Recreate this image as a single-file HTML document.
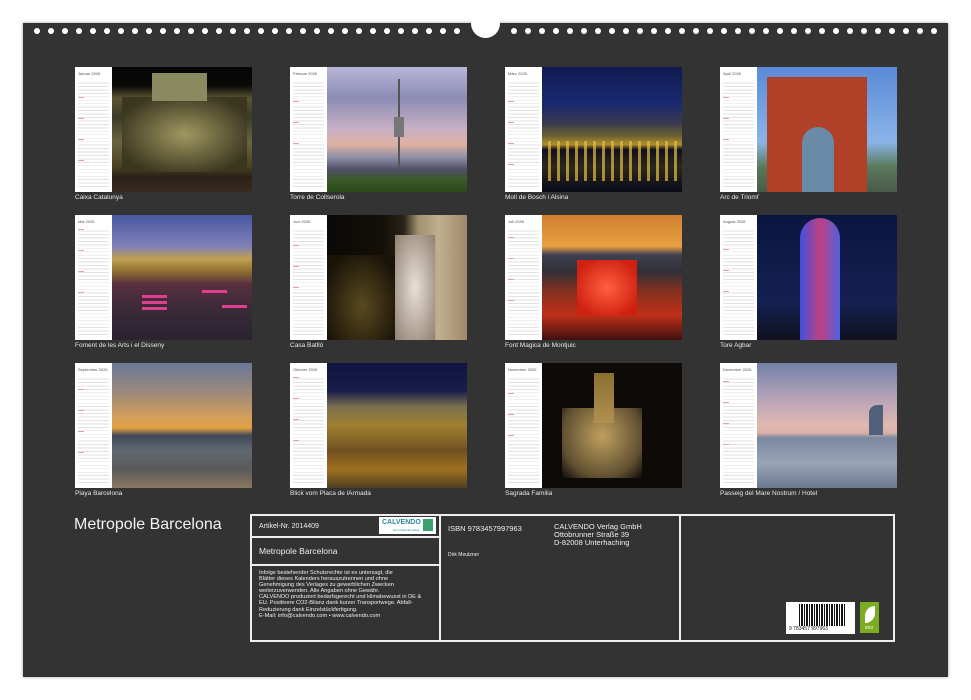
<!DOCTYPE html>
<html><head><meta charset="utf-8"><style>
*{margin:0;padding:0;box-sizing:border-box}
body{width:971px;height:700px;background:#fff;position:relative;overflow:hidden;font-family:"Liberation Sans",Arial,sans-serif}
.panel{position:absolute;left:23px;top:23px;width:925px;height:654px;background:#333;box-shadow:0 0 3px rgba(0,0,0,.4)}
.hole{position:absolute;width:6px;height:6px;border-radius:50%;background:#fff;top:28px}
.notch{position:absolute;left:471px;top:9px;width:29px;height:29px;border-radius:50%;background:#fff}
.cell{position:absolute;width:177px;height:125px}
.strip{position:absolute;left:0;top:0;width:37px;height:125px;background:#fff}
.strip .m{position:absolute;left:3px;top:4px;font-size:4px;color:#555}
.strip .l{position:absolute;left:3px;top:13px;width:31px;height:107px;background:repeating-linear-gradient(to bottom,transparent 0,transparent 2.6px,#e2e2e2 2.6px,#e2e2e2 3.45px)}
.strip .r{position:absolute;left:3px;width:6px;height:1px;background:#e8a0a0}
.ph{position:absolute;left:37px;top:0;width:140px;height:125px;overflow:hidden}
.cap{position:absolute;left:0;top:127px;font-size:6.5px;color:#e8e8e8;white-space:nowrap}
.box{position:absolute;border:2px solid #eee}
.t{position:absolute;color:#eee;white-space:nowrap}
</style></head><body>
<div class="panel"></div>
<div class="hole" style="left:34px"></div><div class="hole" style="left:48px"></div><div class="hole" style="left:62px"></div><div class="hole" style="left:76px"></div><div class="hole" style="left:90px"></div><div class="hole" style="left:104px"></div><div class="hole" style="left:118px"></div><div class="hole" style="left:132px"></div><div class="hole" style="left:146px"></div><div class="hole" style="left:160px"></div><div class="hole" style="left:174px"></div><div class="hole" style="left:188px"></div><div class="hole" style="left:202px"></div><div class="hole" style="left:216px"></div><div class="hole" style="left:230px"></div><div class="hole" style="left:244px"></div><div class="hole" style="left:258px"></div><div class="hole" style="left:272px"></div><div class="hole" style="left:286px"></div><div class="hole" style="left:300px"></div><div class="hole" style="left:314px"></div><div class="hole" style="left:328px"></div><div class="hole" style="left:342px"></div><div class="hole" style="left:356px"></div><div class="hole" style="left:370px"></div><div class="hole" style="left:384px"></div><div class="hole" style="left:398px"></div><div class="hole" style="left:412px"></div><div class="hole" style="left:426px"></div><div class="hole" style="left:440px"></div><div class="hole" style="left:454px"></div>
<div class="notch"></div>
<div class="hole" style="left:511px"></div><div class="hole" style="left:525px"></div><div class="hole" style="left:539px"></div><div class="hole" style="left:553px"></div><div class="hole" style="left:567px"></div><div class="hole" style="left:581px"></div><div class="hole" style="left:595px"></div><div class="hole" style="left:609px"></div><div class="hole" style="left:623px"></div><div class="hole" style="left:637px"></div><div class="hole" style="left:651px"></div><div class="hole" style="left:665px"></div><div class="hole" style="left:679px"></div><div class="hole" style="left:693px"></div><div class="hole" style="left:707px"></div><div class="hole" style="left:721px"></div><div class="hole" style="left:735px"></div><div class="hole" style="left:749px"></div><div class="hole" style="left:763px"></div><div class="hole" style="left:777px"></div><div class="hole" style="left:791px"></div><div class="hole" style="left:805px"></div><div class="hole" style="left:819px"></div><div class="hole" style="left:833px"></div><div class="hole" style="left:847px"></div><div class="hole" style="left:861px"></div><div class="hole" style="left:875px"></div><div class="hole" style="left:889px"></div><div class="hole" style="left:903px"></div><div class="hole" style="left:917px"></div><div class="hole" style="left:931px"></div>

<!-- Row 1 -->
<div class="cell" style="left:75px;top:67px"><div class="strip"><div class="m">Januar 2026</div><div class="l"></div><div class="r" style="top:30px"></div><div class="r" style="top:51px"></div><div class="r" style="top:72px"></div><div class="r" style="top:93px"></div></div>
<div class="ph" style="background:linear-gradient(to bottom,#050505 0,#0a0a08 15%,#5a5530 25%,#3a3a28 40%,#6a6440 60%,#4a4020 80%,#2a2018 88%,#3a2a20 100%)"><div style="position:absolute;left:10px;top:30px;width:125px;height:75px;background:radial-gradient(ellipse at 50% 50%,#a09860,#3a3620 80%)"></div><div style="position:absolute;left:40px;top:6px;width:55px;height:28px;background:#8a8a60"></div></div>
<div class="cap">Caixa Catalunya</div></div>

<div class="cell" style="left:290px;top:67px"><div class="strip"><div class="m">Februar 2026</div><div class="l"></div><div class="r" style="top:34px"></div><div class="r" style="top:55px"></div><div class="r" style="top:76px"></div></div>
<div class="ph" style="background:linear-gradient(to bottom,#b8b6d8 0,#8c8cb4 25%,#c8b0c4 50%,#e0b0a0 62%,#9090a8 72%,#505068 82%,#3a5a2a 90%,#2a4a1a 100%)"><div style="position:absolute;left:71px;top:12px;width:2px;height:90px;background:#555"></div><div style="position:absolute;left:67px;top:50px;width:10px;height:20px;background:#777"></div></div>
<div class="cap">Torre de Collserola</div></div>

<div class="cell" style="left:505px;top:67px"><div class="strip"><div class="m">März 2026</div><div class="l"></div><div class="r" style="top:34px"></div><div class="r" style="top:55px"></div><div class="r" style="top:76px"></div><div class="r" style="top:97px"></div></div>
<div class="ph" style="background:linear-gradient(to bottom,#101a50 0,#1a2a70 30%,#3a3a50 45%,#6a6030 55%,#b09030 62%,#101020 66%,#2a2820 80%,#080a18 100%)"><div style="position:absolute;left:0;top:74px;width:140px;height:40px;background:repeating-linear-gradient(to right,transparent 0,transparent 6px,rgba(230,190,60,.7) 6px,rgba(230,190,60,.7) 9px)"></div></div>
<div class="cap">Moll de Bosch i Alsina</div></div>

<div class="cell" style="left:720px;top:67px"><div class="strip"><div class="m">April 2026</div><div class="l"></div><div class="r" style="top:30px"></div><div class="r" style="top:51px"></div><div class="r" style="top:72px"></div></div>
<div class="ph" style="background:linear-gradient(to bottom,#5a8ad8 0,#8ab4e8 60%,#5a7a5a 80%,#4a5a4a 100%)"><div style="position:absolute;left:10px;top:10px;width:100px;height:115px;background:#b04028"></div><div style="position:absolute;left:45px;top:60px;width:32px;height:65px;border-radius:16px 16px 0 0;background:#6a8aa8"></div></div>
<div class="cap">Arc de Triomf</div></div>

<!-- Row 2 -->
<div class="cell" style="left:75px;top:215px"><div class="strip"><div class="m">Mai 2026</div><div class="l"></div><div class="r" style="top:14px"></div><div class="r" style="top:35px"></div><div class="r" style="top:56px"></div><div class="r" style="top:77px"></div></div>
<div class="ph" style="background:linear-gradient(to bottom,#4858a0 0,#8080b8 25%,#c0a050 35%,#907030 45%,#5a3040 55%,#3a2a38 75%,#2a2430 100%)"><div style="position:absolute;left:30px;top:80px;width:25px;height:3px;background:#e04090;box-shadow:0 6px 0 #e04090,0 12px 0 #e04090,60px -5px 0 #e04090,80px 10px 0 #e04090"></div></div>
<div class="cap">Foment de les Arts i el Disseny</div></div>

<div class="cell" style="left:290px;top:215px"><div class="strip"><div class="m">Juni 2026</div><div class="l"></div><div class="r" style="top:30px"></div><div class="r" style="top:51px"></div><div class="r" style="top:72px"></div></div>
<div class="ph" style="background:linear-gradient(to right,#0a0806 0,#141008 40%,#2a2418 55%,#a09070 65%,#c0b090 80%,#a08868 100%)"><div style="position:absolute;left:0;top:40px;width:70px;height:85px;background:radial-gradient(ellipse at 50% 60%,#5a4a20,#1a1408 80%)"></div><div style="position:absolute;left:68px;top:20px;width:40px;height:105px;background:radial-gradient(ellipse,#e8e0d8,#908070)"></div></div>
<div class="cap">Casa Batlló</div></div>

<div class="cell" style="left:505px;top:215px"><div class="strip"><div class="m">Juli 2026</div><div class="l"></div><div class="r" style="top:22px"></div><div class="r" style="top:43px"></div><div class="r" style="top:64px"></div><div class="r" style="top:85px"></div></div>
<div class="ph" style="background:linear-gradient(to bottom,#d08030 0,#e8a040 25%,#404050 32%,#303038 45%,#803020 60%,#c03018 80%,#401010 100%)"><div style="position:absolute;left:35px;top:45px;width:60px;height:55px;background:radial-gradient(ellipse,#ff6040,#d02010 80%)"></div></div>
<div class="cap">Font Magica de Montjuic</div></div>

<div class="cell" style="left:720px;top:215px"><div class="strip"><div class="m">August 2026</div><div class="l"></div><div class="r" style="top:34px"></div><div class="r" style="top:55px"></div><div class="r" style="top:76px"></div></div>
<div class="ph" style="background:linear-gradient(to bottom,#0a1640,#142050 70%,#101020 100%)"><div style="position:absolute;left:43px;top:3px;width:40px;height:122px;border-radius:20px 20px 0 0;background:linear-gradient(to right,#4050e0,#c04080 50%,#5060e0)"></div></div>
<div class="cap">Tore Agbar</div></div>

<!-- Row 3 -->
<div class="cell" style="left:75px;top:363px"><div class="strip"><div class="m">September 2026</div><div class="l"></div><div class="r" style="top:26px"></div><div class="r" style="top:47px"></div><div class="r" style="top:68px"></div><div class="r" style="top:89px"></div></div>
<div class="ph" style="background:linear-gradient(to bottom,#6a7898 0,#a08a78 25%,#d8a058 45%,#e0a040 52%,#404858 58%,#606870 70%,#5a5a58 85%,#8a7860 100%)"></div>
<div class="cap">Playa Barcelona</div></div>

<div class="cell" style="left:290px;top:363px"><div class="strip"><div class="m">Oktober 2026</div><div class="l"></div><div class="r" style="top:14px"></div><div class="r" style="top:35px"></div><div class="r" style="top:56px"></div><div class="r" style="top:77px"></div></div>
<div class="ph" style="background:linear-gradient(to bottom,#101440 0,#181c48 22%,#7a7050 35%,#a08030 50%,#705020 70%,#a07020 85%,#504020 100%)"></div>
<div class="cap">Blick vom Placa de lArmada</div></div>

<div class="cell" style="left:505px;top:363px"><div class="strip"><div class="m">November 2026</div><div class="l"></div><div class="r" style="top:30px"></div><div class="r" style="top:51px"></div><div class="r" style="top:72px"></div></div>
<div class="ph" style="background:#0e0a08"><div style="position:absolute;left:20px;top:45px;width:80px;height:70px;background:radial-gradient(ellipse at 50% 40%,#c0a060,#605030 70%,#0e0a08 100%)"></div><div style="position:absolute;left:52px;top:10px;width:20px;height:50px;background:linear-gradient(#8a7030,#b09050)"></div></div>
<div class="cap">Sagrada Familia</div></div>

<div class="cell" style="left:720px;top:363px"><div class="strip"><div class="m">Dezember 2026</div><div class="l"></div><div class="r" style="top:18px"></div><div class="r" style="top:39px"></div><div class="r" style="top:60px"></div><div class="r" style="top:81px"></div></div>
<div class="ph" style="background:linear-gradient(to bottom,#7080a8 0,#b0a0b8 25%,#e0b8b0 50%,#d8b0a8 56%,#7a88a0 60%,#9aa4b8 80%,#6a7890 100%)"><div style="position:absolute;left:112px;top:42px;width:14px;height:30px;border-radius:8px 0 0 0;background:#50607a"></div></div>
<div class="cap">Passeig del Mare Nostrum / Hotel</div></div>

<!-- Bottom -->
<div class="t" style="left:74px;top:516px;font-size:16px;color:#f2f2f2">Metropole Barcelona</div>
<div class="box" style="left:250px;top:514px;width:645px;height:128px"></div>
<div style="position:absolute;left:439px;top:514px;width:2px;height:128px;background:#eee"></div>
<div style="position:absolute;left:679px;top:514px;width:2px;height:128px;background:#eee"></div>
<div style="position:absolute;left:250px;top:536px;width:190px;height:2px;background:#eee"></div>
<div style="position:absolute;left:250px;top:564px;width:190px;height:2px;background:#eee"></div>
<div class="t" style="left:259px;top:523px;font-size:7px">Artikel-Nr. 2014409</div>
<div style="position:absolute;left:379px;top:517px;width:57px;height:17px;background:#fff"><span style="position:absolute;left:3px;top:2px;font-size:7px;font-weight:bold;color:#2a8aa0">CALVENDO</span><span style="position:absolute;left:14px;top:11px;font-size:3px;color:#2a8aa0">kein Kalenderverlag</span><span style="position:absolute;left:44px;top:2px;width:10px;height:12px;background:#3aa070"></span></div>
<div class="t" style="left:259px;top:546px;font-size:8.5px">Metropole Barcelona</div>
<div class="t" style="left:259px;top:570px;font-size:5.6px;line-height:6.1px">Infolge bestehender Schutzrechte ist es untersagt, die<br>Blätter dieses Kalenders herauszutrennen und ohne<br>Genehmigung des Verlages zu gewerblichen Zwecken<br>weiterzuverwenden. Alle Angaben ohne Gewähr.<br>CALVENDO produziert bedarfsgerecht und klimabewusst in DE &amp;<br>EU. Positivere CO2-Bilanz dank kurzer Transportwege. Abfall-<br>Reduzierung dank Einzelstückfertigung.<br>E-Mail: info@calvendo.com • www.calvendo.com</div>
<div class="t" style="left:448px;top:524px;font-size:7.5px">ISBN 9783457997963</div>
<div class="t" style="left:448px;top:552px;font-size:5px">Dirk Meutzner</div>
<div class="t" style="left:554px;top:523px;font-size:7.5px;line-height:8px">CALVENDO Verlag GmbH<br>Ottobrunner Straße 39<br>D-82008 Unterhaching</div>
<div style="position:absolute;left:786px;top:602px;width:69px;height:32px;background:#fff"><div style="position:absolute;left:13px;top:2px;width:46px;height:22px;background:repeating-linear-gradient(to right,#111 0,#111 1px,#fff 1px,#fff 2px,#111 2px,#111 4px,#fff 4px,#fff 5px)"></div><span style="position:absolute;left:3px;top:24px;font-size:5px;color:#111">9 783457 997963</span></div>
<div style="position:absolute;left:860px;top:602px;width:19px;height:31px;background:#7aae20"><span style="position:absolute;left:5px;top:4px;width:10px;height:17px;border-radius:10px 0 10px 0;background:#fff"></span><span style="position:absolute;left:5px;top:23px;font-size:5px;color:#fff">eco</span></div>
</body></html>
